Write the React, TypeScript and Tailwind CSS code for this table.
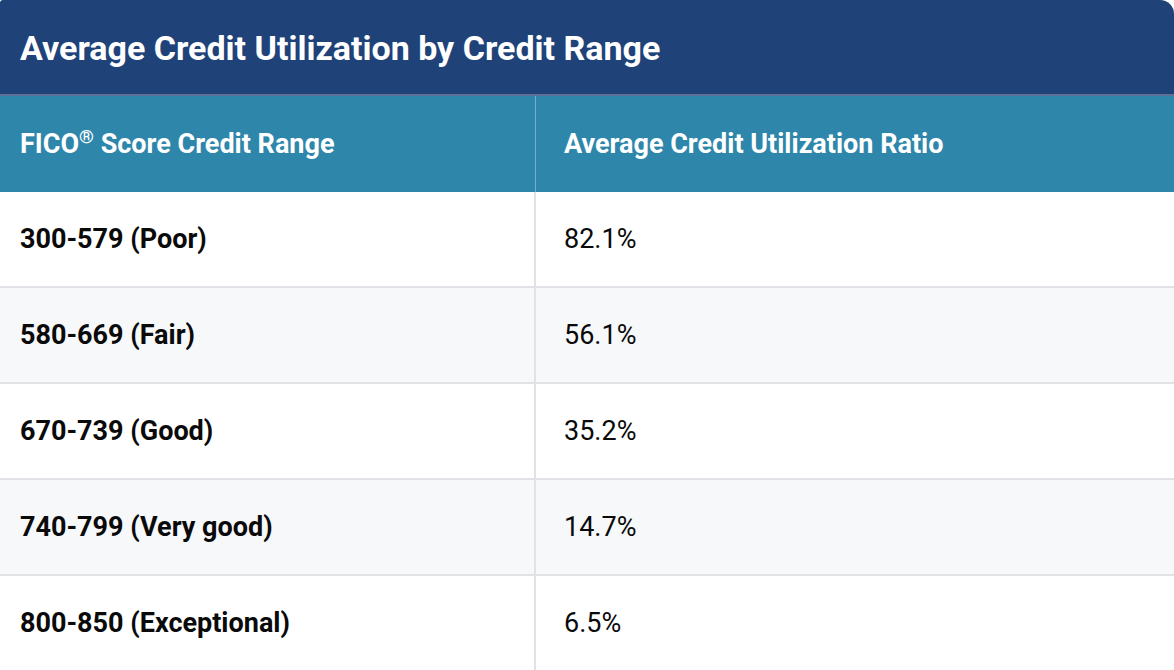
const rows = [
  { range: '300-579 (Poor)', ratio: '82.1%' },
  { range: '580-669 (Fair)', ratio: '56.1%' },
  { range: '670-739 (Good)', ratio: '35.2%' },
  { range: '740-799 (Very good)', ratio: '14.7%' },
  { range: '800-850 (Exceptional)', ratio: '6.5%' },
];

export default function App() {
  return (
    <div className="w-[1174px] h-[670px] overflow-hidden bg-white font-['Roboto',sans-serif]">
      <div className="h-[96px] flex items-center px-5 pt-[2px] bg-[#1f4279] rounded-tl-[3px] rounded-tr-[14px] border-b-2 border-[#5b6f98]">
        <h1 className="text-[34px] font-bold text-white">
          Average Credit Utilization by Credit Range
        </h1>
      </div>
      <div className="grid grid-cols-[536px_1fr] h-[96px] bg-[#2e87ab] text-white text-[27px] font-bold">
        <div className="flex items-center px-5 border-r border-[#77aecb]">
          <span>
            FICO<sup className="text-[19px] relative -top-[10px]">®</sup> Score Credit Range
          </span>
        </div>
        <div className="flex items-center px-7">Average Credit Utilization Ratio</div>
      </div>
      {rows.map((row, i) => (
        <div
          key={row.range}
          className={`grid grid-cols-[536px_1fr] h-[96px] text-[27px] text-[#0a0a0a] border-b-2 border-[#e2e2e6] ${i % 2 === 1 ? 'bg-[#f7f8fa]' : 'bg-white'}`}
        >
          <div className="flex items-center px-5 font-bold border-r-2 border-[#e2e2e6]">{row.range}</div>
          <div className="flex items-center px-7">{row.ratio}</div>
        </div>
      ))}
    </div>
  );
}
